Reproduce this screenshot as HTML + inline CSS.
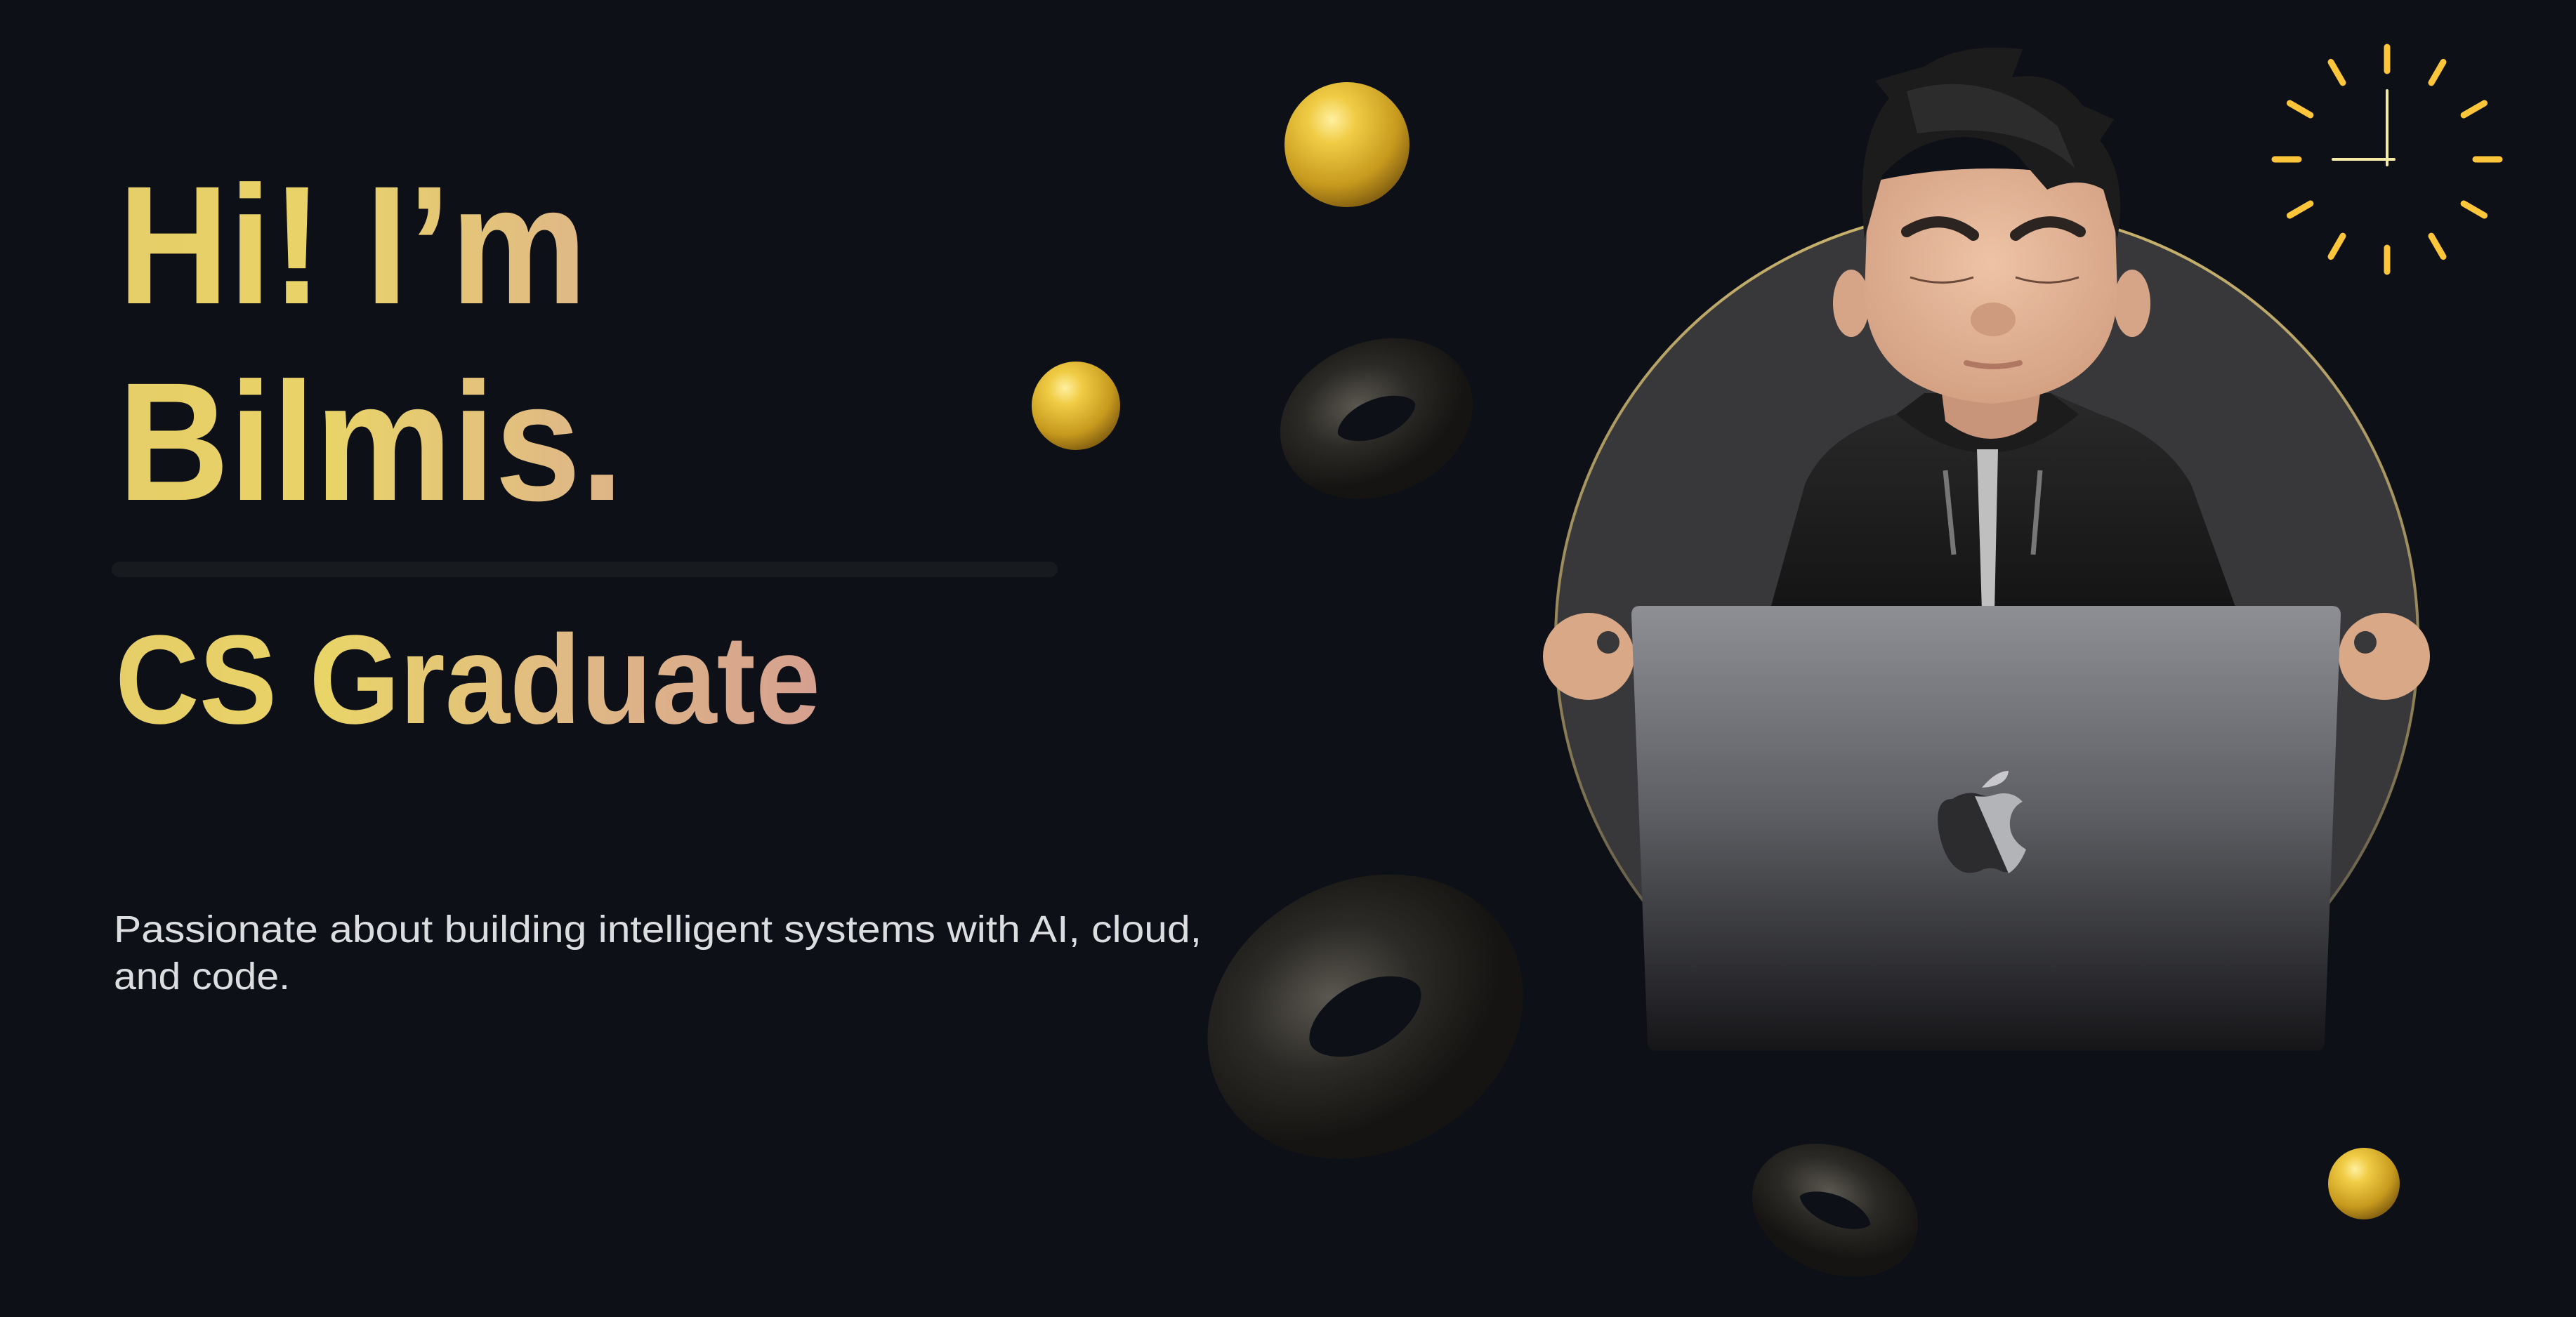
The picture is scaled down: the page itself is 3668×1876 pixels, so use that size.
<!DOCTYPE html>
<html><head><meta charset="utf-8"><style>
html,body{margin:0;padding:0;background:#0d1016;}
svg{display:block}
</style></head><body>
<svg width="3668" height="1876" viewBox="0 0 3668 1876" xmlns="http://www.w3.org/2000/svg">
<defs>
<linearGradient id="tg" gradientUnits="userSpaceOnUse" x1="160" y1="0" x2="1170" y2="0">
<stop offset="0" stop-color="#e6cd68"/><stop offset="0.3" stop-color="#e9d468"/><stop offset="0.65" stop-color="#e0b985"/><stop offset="1" stop-color="#d59f8f"/>
</linearGradient>
<radialGradient id="ball" cx="0.38" cy="0.3" r="0.75">
<stop offset="0" stop-color="#fff0a0"/><stop offset="0.25" stop-color="#f0cc45"/><stop offset="0.7" stop-color="#c79a1e"/><stop offset="1" stop-color="#7d5a10"/>
</radialGradient>
<radialGradient id="tor" cx="0.4" cy="0.3" r="0.8">
<stop offset="0" stop-color="#5a5750"/><stop offset="0.5" stop-color="#2c2a26"/><stop offset="1" stop-color="#151412"/>
</radialGradient>
<linearGradient id="lap" x1="0" y1="0" x2="0" y2="1">
<stop offset="0" stop-color="#8e8f94"/><stop offset="0.45" stop-color="#5f6065"/><stop offset="1" stop-color="#151518"/>
</linearGradient>
<linearGradient id="hood" x1="0" y1="0" x2="0" y2="1">
<stop offset="0" stop-color="#2a2a2a"/><stop offset="1" stop-color="#141414"/>
</linearGradient>
<linearGradient id="ring" x1="0" y1="0" x2="0" y2="1">
<stop offset="0" stop-color="#c9b36e"/><stop offset="0.6" stop-color="#8a7c55"/><stop offset="1" stop-color="#444"/>
</linearGradient>
<radialGradient id="skin" cx="0.5" cy="0.4" r="0.6">
<stop offset="0" stop-color="#eec3a6"/><stop offset="1" stop-color="#d4a183"/>
</radialGradient>
<clipPath id="cc"><rect x="2000" y="0" width="1500" height="1480"/></clipPath>
</defs>

<g font-family="'Liberation Sans', sans-serif" font-weight="bold" fill="url(#tg)">
<text x="168" y="432" font-size="240" textLength="668" lengthAdjust="spacingAndGlyphs">Hi! I’m</text>
<text x="168" y="712" font-size="240" textLength="720" lengthAdjust="spacingAndGlyphs">Bilmis.</text>
<text x="164" y="1030" font-size="180" textLength="1004" lengthAdjust="spacingAndGlyphs">CS Graduate</text>
</g>
<rect x="159" y="800" width="1347" height="22" rx="11" fill="#171a1e"/>
<g font-family="'Liberation Sans', sans-serif" font-size="54" fill="#dcdde1">
<text x="162" y="1342" textLength="1549" lengthAdjust="spacingAndGlyphs">Passionate about building intelligent systems with AI, cloud,</text>
<text x="162" y="1409" textLength="251" lengthAdjust="spacingAndGlyphs">and code.</text>
</g>

<g transform="translate(3399,227)" stroke="#fcc53a" stroke-width="9" stroke-linecap="round">
<g id="tk"><line x1="0" y1="-126" x2="0" y2="-160"/></g>
<use href="#tk" transform="rotate(30)"/><use href="#tk" transform="rotate(60)"/><use href="#tk" transform="rotate(90)"/>
<use href="#tk" transform="rotate(120)"/><use href="#tk" transform="rotate(150)"/><use href="#tk" transform="rotate(180)"/>
<use href="#tk" transform="rotate(210)"/><use href="#tk" transform="rotate(240)"/><use href="#tk" transform="rotate(270)"/>
<use href="#tk" transform="rotate(300)"/><use href="#tk" transform="rotate(330)"/>
<line x1="0" y1="8" x2="0" y2="-98" stroke="#f5e9a8" stroke-width="4"/>
<line x1="10" y1="0" x2="-77" y2="0" stroke="#f5e9a8" stroke-width="4"/>
</g>

<circle cx="1918" cy="206" r="89" fill="url(#ball)"/>
<circle cx="1532" cy="578" r="63" fill="url(#ball)"/>
<circle cx="3366" cy="1686" r="51" fill="url(#ball)"/>

<g transform="translate(1960,596) rotate(-22)"><ellipse rx="100" ry="68" fill="none" stroke="url(#tor)" stroke-width="82"/></g>
<g transform="translate(1944,1448) rotate(-28)"><ellipse rx="160" ry="120" fill="none" stroke="url(#tor)" stroke-width="145"/></g>
<g transform="translate(2613,1724) rotate(22)"><ellipse rx="88" ry="55" fill="none" stroke="url(#tor)" stroke-width="68"/></g>

<circle cx="2829" cy="912" r="614" fill="#38383b" stroke="url(#ring)" stroke-width="4" clip-path="url(#cc)"/>

<path d="M2520 870 L2570 690 Q2600 620 2700 590 L2760 560 L2920 560 L2990 590 Q3080 620 3120 690 L3185 870 Z" fill="url(#hood)"/>
<path d="M2700 590 Q2830 700 2960 590 L2920 560 L2740 560 Z" fill="#1c1c1c"/>
<path d="M2815 640 L2845 640 L2840 870 L2822 870 Z" fill="#bfbfbf"/>
<path d="M2770 670 L2782 790" stroke="#777" stroke-width="7" fill="none"/>
<path d="M2905 670 L2895 790" stroke="#777" stroke-width="7" fill="none"/>
<path d="M2760 520 L2910 520 L2900 600 Q2835 650 2770 600 Z" fill="#c9957a"/>
<ellipse cx="2636" cy="432" rx="26" ry="48" fill="#d6a487"/>
<ellipse cx="3036" cy="432" rx="26" ry="48" fill="#d6a487"/>
<path d="M2660 260 Q2835 220 3010 260 L3015 420 Q3010 560 2835 575 Q2660 560 2655 420 Z" fill="url(#skin)"/>
<path d="M2655 340 Q2640 200 2690 140 L2670 115 Q2720 100 2740 95 Q2790 60 2880 70 L2865 110 Q2930 100 2965 150 L3010 170 L2990 200 Q3030 250 3015 340 L2995 270 Q2960 250 2915 270 L2880 230 Q2860 200 2800 195 Q2730 195 2680 250 Z" fill="#1c1c1c"/>
<path d="M2715 130 Q2830 95 2930 180 L2955 240 Q2880 170 2730 190 Z" fill="#2c2c2c"/>
<path d="M2715 330 Q2765 300 2810 335" stroke="#2b2421" stroke-width="16" fill="none" stroke-linecap="round"/>
<path d="M2870 335 Q2915 300 2962 330" stroke="#2b2421" stroke-width="16" fill="none" stroke-linecap="round"/>
<path d="M2720 395 Q2765 410 2810 395" stroke="#6b4a3a" stroke-width="3" fill="none"/>
<path d="M2870 395 Q2915 410 2960 395" stroke="#6b4a3a" stroke-width="3" fill="none"/>
<ellipse cx="2838" cy="455" rx="32" ry="24" fill="#cf9b7e"/>
<path d="M2800 517 Q2838 527 2876 517" stroke="#b07862" stroke-width="8" fill="none" stroke-linecap="round"/>

<ellipse cx="2262" cy="935" rx="65" ry="62" fill="#d9a887"/>
<ellipse cx="3395" cy="935" rx="65" ry="62" fill="#d9a887"/>
<circle cx="2290" cy="915" r="16" fill="#38383b"/>
<circle cx="3368" cy="915" r="16" fill="#38383b"/>

<path d="M2335 863 L3320 863 Q3333 863 3333 876 L3310 1484 Q3310 1497 3297 1497 L2359 1497 Q2346 1497 2346 1484 L2323 876 Q2323 863 2335 863 Z" fill="url(#lap)"/>
<g transform="translate(2830,1180)">
<path d="M-8 -58 Q12 -82 30 -82 Q28 -60 -8 -58 Z" fill="#c8c8cc"/>
<path d="M-50 -42 Q-75 -42 -70 0 Q-62 50 -35 62 Q-20 66 -5 58 Q8 54 22 62 Q40 66 55 30 Q30 15 32 -10 Q34 -30 50 -38 Q35 -55 10 -48 Q0 -44 -10 -48 Q-30 -55 -50 -42 Z" fill="#2c2c2f"/>
<path d="M-18 -46 Q0 -44 10 -48 Q35 -55 50 -38 Q34 -30 32 -10 Q30 15 55 30 Q45 55 30 64 Z" fill="#b3b4b8"/>
</g>
</svg>
</body></html>
